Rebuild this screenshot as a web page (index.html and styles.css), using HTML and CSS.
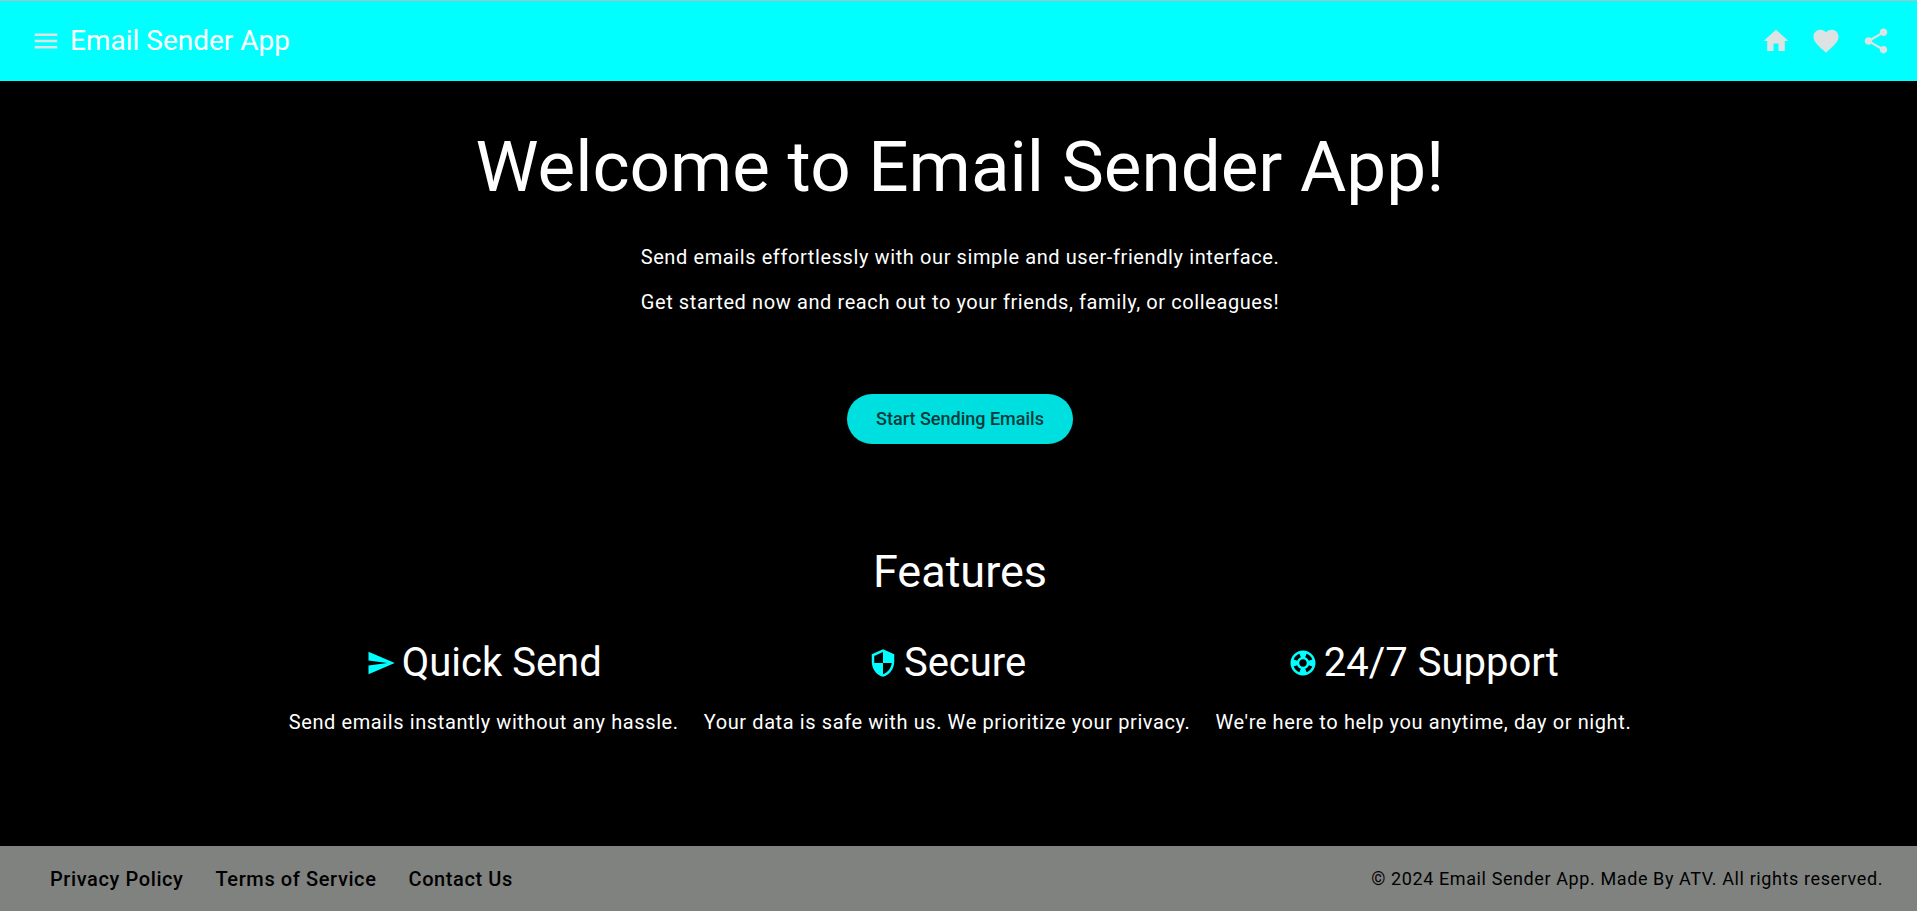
FILE: index.html
```html
<!DOCTYPE html>
<html lang="en">
<head>
<meta charset="utf-8">
<meta name="viewport" content="width=device-width, initial-scale=1">
<title>Email Sender App</title>
<link rel="stylesheet" href="styles.css">
</head>
<body>
<header class="toolbar">
  <button class="icon-button" type="button" aria-label="Menu">
    <svg class="icon" viewBox="0 0 24 24"><path d="M3 18h18v-2H3v2zm0-5h18v-2H3v2zm0-7v2h18V6H3z"/></svg>
  </button>
  <span class="toolbar-title">Email Sender App</span>
  <div class="toolbar-actions">
    <button class="icon-button" type="button" aria-label="Home">
      <svg class="icon" viewBox="0 0 24 24"><path d="M10 20v-6h4v6h5v-8h3L12 3 2 12h3v8z"/></svg>
    </button>
    <button class="icon-button" type="button" aria-label="Favorite">
      <svg class="icon" viewBox="0 0 24 24"><path d="M12 21.35l-1.45-1.32C5.4 15.36 2 12.28 2 8.5 2 5.42 4.42 3 7.5 3c1.74 0 3.41.81 4.5 2.09C13.09 3.81 14.76 3 16.5 3 19.58 3 22 5.42 22 8.5c0 3.78-3.4 6.86-8.55 11.54L12 21.35z"/></svg>
    </button>
    <button class="icon-button" type="button" aria-label="Share">
      <svg class="icon" viewBox="0 0 24 24"><path d="M18 16.08c-.76 0-1.44.3-1.96.77L8.91 12.7c.05-.23.09-.46.09-.7s-.04-.47-.09-.7l7.05-4.11c.54.5 1.25.81 2.04.81 1.66 0 3-1.34 3-3s-1.34-3-3-3-3 1.34-3 3c0 .24.04.47.09.7L8.04 9.81C7.5 9.31 6.79 9 6 9c-1.66 0-3 1.34-3 3s1.34 3 3 3c.79 0 1.5-.31 2.04-.81l7.12 4.16c-.05.21-.08.43-.08.65 0 1.61 1.31 2.92 2.92 2.92 1.61 0 2.92-1.31 2.92-2.92s-1.31-2.92-2.92-2.92z"/></svg>
    </button>
  </div>
</header>
<main class="content">
  <section class="hero">
    <h1 class="hero-title">Welcome to Email Sender App!</h1>
    <div class="hero-text">
      <p class="body-text">Send emails effortlessly with our simple and user-friendly interface.</p>
      <p class="body-text">Get started now and reach out to your friends, family, or colleagues!</p>
    </div>
    <button class="cta" type="button">Start Sending Emails</button>
  </section>
  <section class="features">
    <h2 class="features-title">Features</h2>
    <div class="feature-list">
      <article class="feature">
        <h3 class="feature-title">
          <svg class="icon" viewBox="0 0 24 24" aria-hidden="true"><path d="M2.01 21L23 12 2.01 3 2 10l15 2-15 2z"/></svg>
          Quick Send
        </h3>
        <p class="body-text">Send emails instantly without any hassle.</p>
      </article>
      <article class="feature">
        <h3 class="feature-title">
          <svg class="icon" viewBox="0 0 24 24" aria-hidden="true"><path d="M12 1L3 5v6c0 5.55 3.84 10.74 9 12 5.16-1.26 9-6.45 9-12V5l-9-4zm0 10.99h7c-.53 4.12-3.28 7.79-7 8.94V12H5V6.3l7-3.11v8.8z"/></svg>
          Secure
        </h3>
        <p class="body-text">Your data is safe with us. We prioritize your privacy.</p>
      </article>
      <article class="feature">
        <h3 class="feature-title">
          <svg class="icon" viewBox="0 0 24 24" aria-hidden="true"><path d="M12 2C6.48 2 2 6.48 2 12s4.48 10 10 10 10-4.48 10-10S17.52 2 12 2zm7.46 7.12l-2.78 1.15c-.51-1.36-1.58-2.44-2.95-2.94l1.15-2.78c2.1.8 3.77 2.47 4.58 4.57zM12 15c-1.66 0-3-1.34-3-3s1.34-3 3-3 3 1.34 3 3-1.34 3-3 3zM9.13 4.54l1.17 2.78c-1.38.5-2.47 1.59-2.98 2.97L4.54 9.13c.81-2.11 2.48-3.78 4.59-4.59zM4.54 14.87l2.78-1.15c.51 1.38 1.59 2.46 2.97 2.96l-1.17 2.78c-2.1-.81-3.77-2.48-4.58-4.59zm10.34 4.59l-1.15-2.78c1.37-.51 2.45-1.59 2.95-2.97l2.78 1.17c-.81 2.1-2.48 3.77-4.58 4.58z"/></svg>
          24/7 Support
        </h3>
        <p class="body-text">We're here to help you anytime, day or night.</p>
      </article>
    </div>
  </section>
</main>
<footer class="footer">
  <nav class="footer-links">
    <a class="footer-link" href="#privacy">Privacy Policy</a>
    <a class="footer-link" href="#terms">Terms of Service</a>
    <a class="footer-link" href="#contact">Contact Us</a>
  </nav>
  <p class="copyright">© 2024 Email Sender App. Made By ATV. All rights reserved.</p>
</footer>
</body>
</html>
```
FILE: styles.css
```css
* {
  box-sizing: border-box;
}

body {
  display: flex;
  flex-direction: column;
  min-height: 100vh;
  margin: 0;
  background: #000;
  color: #fff;
  font-family: Roboto, "Liberation Sans", sans-serif;
  font-size: 20px;
  line-height: 30px;
}

h1, h2, h3, p {
  margin: 0;
  font-weight: 400;
}

.icon {
  display: block;
  flex: none;
  width: 30px;
  height: 30px;
  fill: currentColor;
}

.toolbar {
  display: flex;
  align-items: center;
  gap: 9px;
  padding: 25px 26px 25px 31px;
  border-top: 1px solid #bababa;
  background: #0ff;
}

.toolbar-title {
  font-size: 28px;
}

.toolbar-actions {
  display: flex;
  gap: 20px;
  margin-left: auto;
}

.icon-button {
  padding: 0;
  border: 0;
  background: none;
  color: #dde3e2;
  cursor: pointer;
}

.content {
  flex: 1;
  padding: 46px 24px 46px 27px;
  text-align: center;
}

.hero {
  display: flex;
  flex-direction: column;
  align-items: center;
}

.hero-title {
  font-size: 71px;
  line-height: 80px;
}

.hero-text {
  display: grid;
  gap: 15px;
  margin-top: 35px;
}

.body-text,
.footer {
  letter-spacing: 0.03em;
}

.cta {
  margin-top: 77px;
  padding: 10px 29px;
  border: 0;
  border-radius: 25px;
  background: #00dfdf;
  color: #003c3c;
  font: 500 18px/30px Roboto, "Liberation Sans", sans-serif;
  cursor: pointer;
}

.features {
  margin-top: 100px;
}

.features-title {
  font-size: 45px;
  line-height: 55px;
}

.feature-list {
  display: flex;
  flex-wrap: wrap;
  justify-content: center;
  gap: 25px;
  margin-top: 39px;
}

.feature {
  display: grid;
  gap: 19px;
}

.feature-title {
  display: flex;
  align-items: center;
  justify-content: center;
  gap: 6px;
  font-size: 40px;
  line-height: 50px;
}

.feature-title .icon {
  color: #0ff;
}

.footer {
  display: flex;
  flex-wrap: wrap;
  align-items: center;
  justify-content: space-between;
  padding: 18px 34px 17px 50px;
  background: #808280;
  color: #000;
}

.footer-links {
  display: flex;
  gap: 32px;
}

.footer-link {
  color: #000;
  font-weight: 500;
  text-decoration: none;
}

.copyright {
  font-size: 18px;
}
```
